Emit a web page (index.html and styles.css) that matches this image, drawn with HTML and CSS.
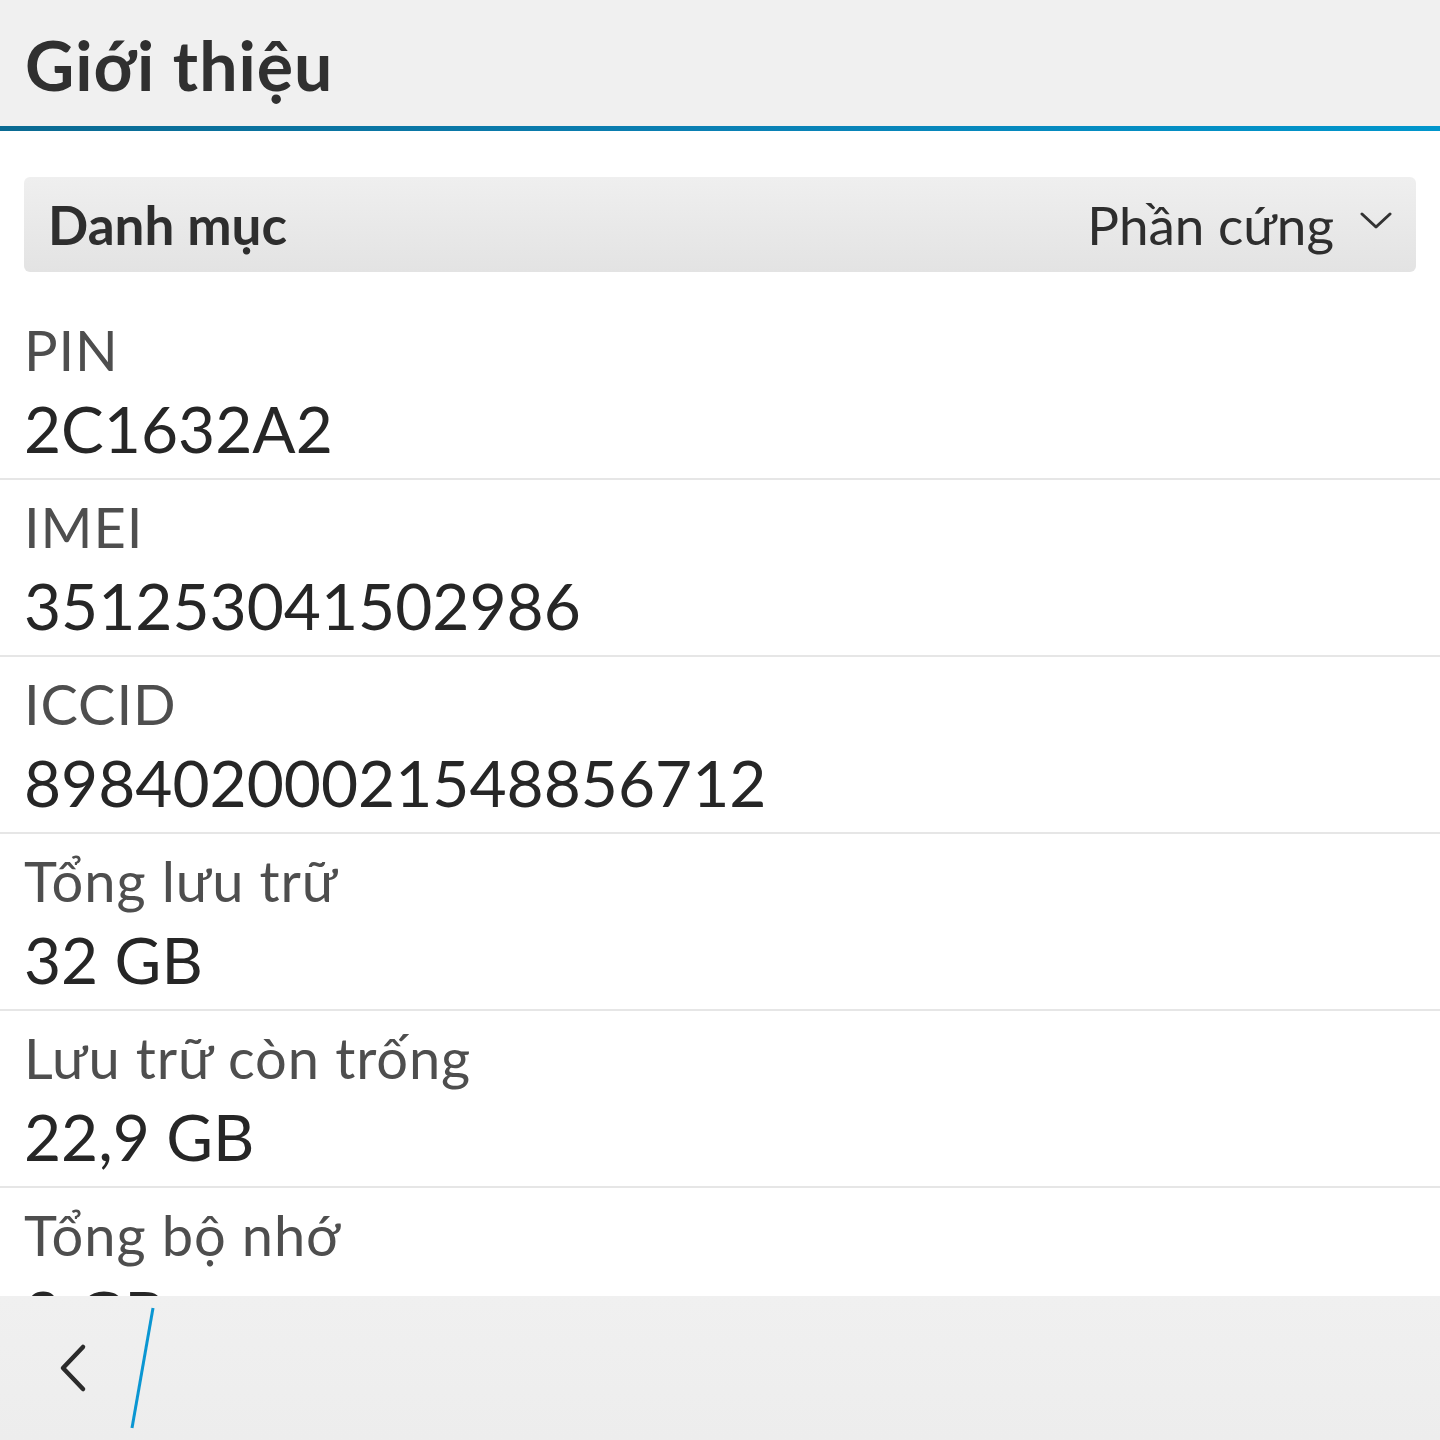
FILE: index.html
```html
<!DOCTYPE html>
<html lang="vi">
<head>
<meta charset="utf-8">
<title>Giới thiệu</title>
<link rel="stylesheet" href="styles.css">
</head>
<body>
<div class="screen">
  <header class="titlebar">
    <h1 class="title">Giới thiệu</h1>
  </header>
  <div class="accent"></div>
  <div class="dropdown">
    <span class="dd-label">Danh mục</span>
    <span class="dd-value">Phần cứng</span>
    <svg class="dd-chevron" width="32" height="18" viewBox="0 0 32 18"><path d="M2 2 L16 15 L30 2" fill="none" stroke="#333" stroke-width="3" stroke-linecap="round" stroke-linejoin="round"/></svg>
  </div>
  <div class="list">
    <div class="row"><div class="label">PIN</div><div class="value">2C1632A2</div></div>
    <div class="row"><div class="label">IMEI</div><div class="value">351253041502986</div></div>
    <div class="row"><div class="label">ICCID</div><div class="value">89840200021548856712</div></div>
    <div class="row"><div class="label">Tổng lưu trữ</div><div class="value">32 GB</div></div>
    <div class="row"><div class="label">Lưu trữ còn trống</div><div class="value">22,9 GB</div></div>
    <div class="row"><div class="label">Tổng bộ nhớ</div><div class="value">3 GB</div></div>
  </div>
  <footer class="actionbar">
    <div class="back">
      <svg width="40" height="60" viewBox="0 0 40 60"><path d="M30 9 L10 30 L30 51" fill="none" stroke="#2b2b2b" stroke-width="4.5" stroke-linecap="round" stroke-linejoin="round"/></svg>
    </div>
    <svg class="divider" width="30" height="124" viewBox="0 0 30 124"><path d="M25 2 L4 122" stroke="#0a96d2" stroke-width="3"/></svg>
  </footer>
</div>
</body>
</html>
```

FILE: styles.css
```css
* { box-sizing: border-box; }
html, body { margin: 0; padding: 0; background: #fff; }
body { font-family: Lato, "Noto Sans", sans-serif; }

.screen {
  width: 1440px;
  height: 1440px;
  display: flex;
  flex-direction: column;
  overflow: hidden;
}

.titlebar {
  height: 126px;
  background: #f0f0f0;
  padding: 4px 0 0 25px;
  flex: none;
}
.title {
  margin: 0;
  font-size: 68px;
  font-weight: 700;
  line-height: 122px;
  letter-spacing: 1px;
  color: #303030;
}

.accent {
  height: 5px;
  flex: none;
  background: linear-gradient(to right, #0a6a92, #0a80b4 50%, #0096cc);
}

.dropdown {
  flex: none;
  margin: 46px 24px 0 24px;
  height: 95px;
  border-radius: 6px;
  background: linear-gradient(to bottom, #efefef, #e3e3e3);
  display: flex;
  align-items: center;
  padding: 0 24px 0 24px;
  line-height: 95px;
}
.dd-label {
  font-size: 53px;
  font-weight: 700;
  color: #2e2e2e;
  flex: 1;
}
.dd-value {
  font-size: 53px;
  color: #2e2e2e;
}
.dd-chevron {
  margin-left: 26px;
  margin-top: -8px;
}

.list {
  flex: 1;
  min-height: 0;
  overflow: hidden;
  margin-top: 31px;
}

.row {
  height: 177px;
  padding: 12px 0 0 24px;
  border-bottom: 2px solid #e6e6e6;
}
.label {
  font-size: 56px;
  line-height: 70px;
  letter-spacing: 0.9px;
  color: #4e4e4e;
}
.value {
  margin-top: 4px;
  font-size: 64px;
  line-height: 80px;
  color: #262626;
}

.actionbar {
  flex: none;
  height: 144px;
  background: linear-gradient(to bottom, #f0f0f0, #ededed);
  display: flex;
  align-items: center;
}
.back {
  width: 128px;
  height: 144px;
  display: flex;
  align-items: center;
  padding-left: 53px;
}
.divider {
  margin-left: 0;
}
```
